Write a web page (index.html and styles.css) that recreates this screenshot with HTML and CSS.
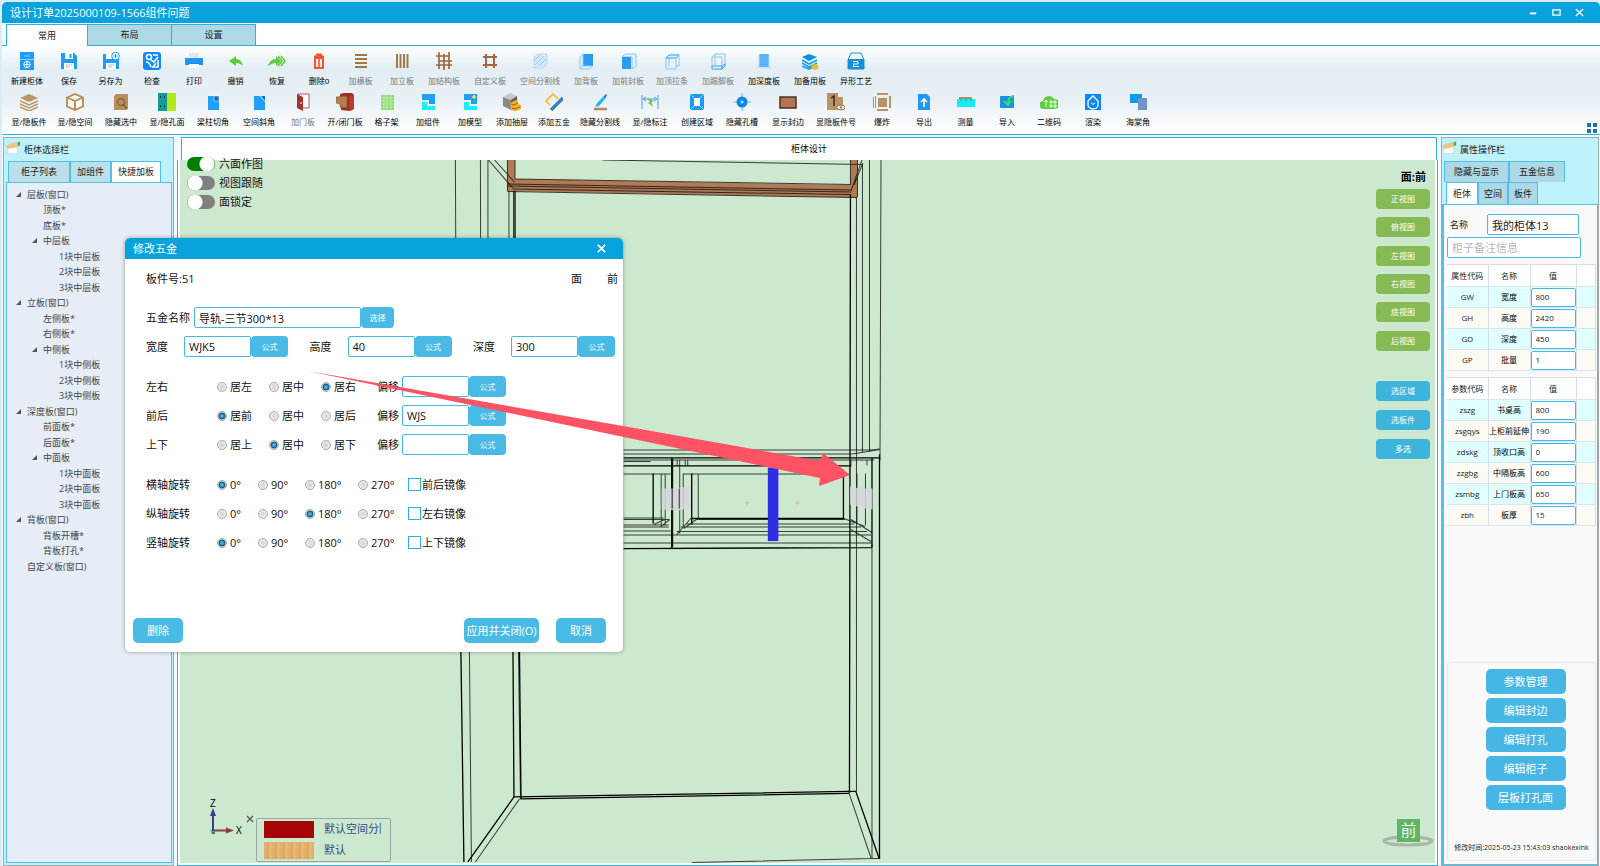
FILE: index.html
```html
<!DOCTYPE html>
<html lang="zh-CN">
<head>
    <meta charset="UTF-8">
    <meta name="viewport" content="width=device-width, initial-scale=1.0">
    <title>设计订单2025000109-1566组件问题</title>
    <link rel="stylesheet" href="styles.css">
</head>
<body>
    <header class="titlebar">
        <h1>设计订单2025000109-1566组件问题</h1>
        <div class="window-controls">
            <button type="button" aria-label="最小化"><svg viewBox="0 0 10 10"><path d="M1 6h7" stroke="#fff" stroke-width="2"/></svg></button>
            <button type="button" aria-label="最大化"><svg viewBox="0 0 10 10"><path d="M1 2h8v6H1z" fill="none" stroke="#fff" stroke-width="1.4"/></svg></button>
            <button type="button" aria-label="关闭"><svg viewBox="0 0 10 10"><path d="M1 1l8 8M9 1l-8 8" stroke="#fff" stroke-width="1.6"/></svg></button>
        </div>
    </header>

    <nav class="ribbon-tabs">
        <button type="button" class="active">常用</button>
        <button type="button">布局</button>
        <button type="button">设置</button>
    </nav>

    <section class="ribbon">
        <div class="tools tools-first">
            <button type="button"><svg viewBox="0 0 18 18"><path d="M2 0h14v18H2z" fill="#1c9cf6"/><path d="M2 7.500h14" stroke="#8fd0ff"/><path d="M6 4h6" stroke="#8fd0ff"/><circle cx="9" cy="12.500" r="3.200" fill="none" stroke="#fff"/><path d="M9 10v5M6.500 12.500h5" stroke="#fff"/></svg>新建柜体</button>
            <button type="button"><svg viewBox="0 0 18 18"><path d="M1 1h13l3 3v13H1z" fill="#1e9bff"/><path d="M5 1h8v6H5zM4 11h10v6H4z" fill="#fff"/><path d="M9.500 2h2v4h-2z" fill="#1e9bff"/><path d="M6 13h6M6 15h4" stroke="#bbb"/></svg>保存</button>
            <button type="button"><svg viewBox="0 0 18 18"><path d="M1 2h13l3 3v12H1z" fill="#1e9bff"/><path d="M4 2h7v5H4zM4 11h10v6H4z" fill="#fff"/><path d="M6 13h6M6 15h4" stroke="#bbb"/><circle cx="13.500" cy="4" r="3.800" fill="#fff" stroke="#1e9bff"/><path d="M13.500 2v4M11.500 4h4" stroke="#1e9bff"/></svg>另存为</button>
            <button type="button"><svg viewBox="0 0 18 18"><rect width="18" height="18" rx="3" fill="#0e8bff"/><circle cx="6" cy="5" r="2.500" fill="none" stroke="#fff" stroke-width="1.500"/><path d="M10 3h5M3 10c3 0 4 2 5 5M8 8l3 2 4-5M15 8v7h-5l3-4" fill="none" stroke="#fff" stroke-width="1.600"/></svg>检查</button>
            <button type="button"><svg viewBox="0 0 18 18"><path d="M4 1h10v5H4z" fill="#e3e6ea"/><path d="M0 6h18v7H0z" fill="#1f97f2"/><path d="M4 12h10v4H4z" fill="#fff"/><path d="M3 11.500h12" stroke="#2b87d0"/></svg>打印</button>
            <button type="button"><svg viewBox="0 0 18 18"><path d="M2 9l7-5v3c4 0 6 3 7 7-2-2-4-3-7-3v3z" fill="#5ccc3c"/></svg>撤销</button>
            <button type="button"><svg viewBox="0 0 18 18"><path d="M13 9L8 4v3c-4 0-7 3-8 7 3-2 5-3 8-3v3z" fill="#5ccc3c"/><path d="M10 4l4 5-4 5M13 4l4 5-4 5" fill="none" stroke="#5ccc3c" stroke-width="1.500"/></svg>恢复</button>
            <button type="button"><svg viewBox="0 0 18 18"><path d="M5 6h8v10H5z" fill="none" stroke="#f2552c" stroke-width="2"/><path d="M4 4.500h10M7 3.500v-1h4v1" fill="none" stroke="#f2552c" stroke-width="1.800"/><path d="M9 7v8" stroke="#f2552c" stroke-width="1.600"/></svg>删除0</button>
            <button type="button" class="dim"><svg viewBox="0 0 18 18"><path d="M3 3h12M3 7h12M3 11h12M3 15h12" stroke="#a3764a" stroke-width="2"/></svg>加横板</button>
            <button type="button" class="dim"><svg viewBox="0 0 18 18"><path d="M4 2v14M7.500 2v14M11 2v14M14.500 2v14" stroke="#a3764a" stroke-width="2"/></svg>加立板</button>
            <button type="button" class="dim"><svg viewBox="0 0 18 18"><path d="M4 0v17M9 2v16M14 0v17M1 4h13M3 9h14M1 13h16" stroke="#a3673a" stroke-width="1.700"/></svg>加结构板</button>
            <button type="button" class="dim"><svg viewBox="0 0 18 18"><path d="M5 2v14M13 2v14M2 5h14M2 13h14" stroke="#a3673a" stroke-width="2"/></svg>自定义板</button>
            <button type="button" class="dim"><svg viewBox="0 0 18 18"><path d="M3 5l4-3h9v10l-4 4H3z" fill="#d3e8fa" stroke="#b5d8f4"/><path d="M4 13l9-9M8 14l7-7M3 9l6-6" stroke="#9ccbf0"/></svg>空间分割线</button>
            <button type="button" class="dim"><svg viewBox="0 0 18 18"><path d="M6 2h10v12H6z" fill="#2c9cf2"/><path d="M3 5l3-3v12l-3 3zM3 17h9l4-3H6" fill="#e4f3ff" stroke="#8cc6f5"/></svg>加背板</button>
            <button type="button" class="dim"><svg viewBox="0 0 18 18"><path d="M6 2h11v12l-4 3V5H3z" fill="#e4f3ff" stroke="#8cc6f5"/><path d="M3 5h9v12H3z" fill="#2c9cf2"/></svg>加前封板</button>
            <button type="button" class="dim"><svg viewBox="0 0 18 18"><path d="M3 6h10v11H3zM6 3h10v11h-3M6 6v8" fill="none" stroke="#8cc6f5"/><path d="M3 6l3-3h10l-3 3z" fill="#dceffd" stroke="#43a6f0"/></svg>加顶拉条</button>
            <button type="button" class="dim"><svg viewBox="0 0 18 18"><path d="M3 5h10v12H3zM6 2h10v12h-3M3 5l3-3v12" fill="none" stroke="#8cc6f5"/><path d="M3 14h10v3H3zM13 14l3-2v2l-3 3z" fill="#dceffd" stroke="#43a6f0"/></svg>加踢脚板</button>
            <button type="button"><svg viewBox="0 0 18 18"><path d="M4 2h10v13H4z" fill="#5db2f7"/><path d="M4 2v13l-2 1M14 2v13l2 1M4 16h11" fill="none" stroke="#b9ddfa"/></svg>加深度板</button>
            <button type="button"><svg viewBox="0 0 18 18"><path d="M1 5l7-3 8 3-8 4z" fill="#0b8fdc"/><path d="M1 8l7 4 8-4M1 11l7 4 8-4M1 14l7 3 4-2" fill="none" stroke="#1b9fe6" stroke-width="1.700"/><ellipse cx="14" cy="15" rx="3.500" ry="2.800" fill="#eebf2d"/></svg>加备用板</button>
            <button type="button"><svg viewBox="0 0 18 18"><path d="M4 1h10l3 7v9H1V8z" fill="#f3fafe" stroke="#178fd6"/><path d="M1 7h16v9q0 1-1 1H2q-1 0-1-1z" fill="#178fd6"/><path d="M6 9.500h5v2.500H6.500v2.500H12" fill="none" stroke="#fff"/></svg>异形工艺</button>
        </div>
        <div class="tools tools-second">
            <button type="button"><svg viewBox="0 0 18 18"><path d="M0 5l9-4 9 4-9 4z" fill="#bb9464"/><path d="M0 8l9 4 9-4M0 11l9 4 9-4M0 14l9 4 9-4" fill="none" stroke="#bb9464" stroke-width="1.500"/></svg>显/隐板件</button>
            <button type="button"><svg viewBox="0 0 18 18"><path d="M9 1l8 3.500v9L9 17l-8-3.500v-9zM1 4.500L9 8l8-3.500M9 8v9" fill="#fffaf2" stroke="#b68d5c" stroke-width="1.900"/></svg>显/隐空间</button>
            <button type="button"><svg viewBox="0 0 18 18"><path d="M2 3l2-2h12v14l-2 2H2z" fill="#b98e5e"/><circle cx="9" cy="9" r="3.500" fill="none" stroke="#7c552c"/><path d="M11 11l4 5" stroke="#7c552c" stroke-width="1.400"/></svg>隐藏选中</button>
            <button type="button"><svg viewBox="0 0 18 18"><path d="M0 0h9v18H0z" fill="#129b95"/><path d="M9 0h9v18H9z" fill="#b4e61c"/><path d="M2 4h1M6 4h1M2 13h1M6 13h1" stroke="#113" stroke-width="1.500"/></svg>显/隐孔面</button>
            <button type="button"><svg viewBox="0 0 18 18"><path d="M4 3h11v14H4z" fill="#1fa0ff"/><path d="M10 3h5v5h-5z" fill="#0870c4" stroke="#fff" stroke-width=".5"/></svg>梁柱切角</button>
            <button type="button"><svg viewBox="0 0 18 18"><path d="M4 3h6l5 6v8H4z" fill="#1fa0ff"/><path d="M11 3h4v5z" fill="#0870c4"/></svg>空间斜角</button>
            <button type="button" class="dim"><svg viewBox="0 0 18 18"><path d="M4 1h11v14H4z" fill="#fff" stroke="#b8544e"/><path d="M3 1l6 3v14l-6-3z" fill="#a3322c"/><path d="M7 9v2" stroke="#fff"/></svg>加门板</button>
            <button type="button"><svg viewBox="0 0 18 18"><path d="M4 1l4-1h8l2 2v14l-4 2-9-1z" fill="#9d2f22"/><path d="M13 3l5-1v14l-5 2z" fill="#c03a28"/><path d="M0 4l11-1v12l-7-1v-3l-4-1z" fill="#b77d50" stroke="#8a5429" stroke-width=".6"/></svg>开/闭门板</button>
            <button type="button"><svg viewBox="0 0 18 18"><path d="M3 2h13v15H3z" fill="#90dc72"/><path d="M3 5h13M3 8h13M3 11h13M3 14h13M6 2v15M9 2v15M13 2v15" stroke="#c5f0b5" stroke-width=".7"/></svg>格子架</button>
            <button type="button"><svg viewBox="0 0 18 18"><path d="M3 1h13v10h-6V7H3z" fill="#1fa0ff"/><path d="M3 9h5v4h8v4H3z" fill="#19efff"/></svg>加组件</button>
            <button type="button"><svg viewBox="0 0 18 18"><path d="M3 1h13v10h-6V7H3z" fill="#1fa0ff"/><path d="M3 9h5v4h8v4H3z" fill="#19efff"/><path d="M13 2v4M11 4h4" stroke="#ffe23d" stroke-width="1.500"/></svg>加模型</button>
            <button type="button"><svg viewBox="0 0 18 18"><path d="M0 4l7-4 7 3-6 4z" fill="#c8c8c8"/><path d="M0 4l8 3v10l-8-4z" fill="#888"/><path d="M8 7l6-4v10l-6 4z" fill="#5c5c5c"/><path d="M7 10l6-3 2 1v3l3 1v4l-7 3-3-3z" fill="#f0b32c"/><path d="M8 11l3 1 4-2M9 15l3 1 5-2" fill="none" stroke="#9a6510"/></svg>添加抽屉</button>
            <button type="button"><svg viewBox="0 0 18 18"><path d="M5 12L1 8l7-7 5 5" fill="none" stroke="#f7bf32" stroke-width="1.800"/><path d="M6 17L18 5" stroke="#3c80b8" stroke-width="3.400"/></svg>添加五金</button>
            <button type="button"><svg viewBox="0 0 18 18"><path d="M12 4l3-3 1 1-2 4z" fill="#1c7fe0"/><path d="M12 4l2 2-6 7-4 1 2-4z" fill="#19bdf5"/><path d="M3 16h13" stroke="#b38a64" stroke-width="2.500"/></svg>隐藏分割线</button>
            <button type="button"><svg viewBox="0 0 18 18"><path d="M1 2v14M17 2v14M2 6h14M2 6l3-2M2 6l3 2M16 6l-3-2M16 6l-3 2" fill="none" stroke="#4ba3dc"/><path d="M6 5l7 3-3 1 2 5-5-4 2-1z" fill="#5ccc3c"/></svg>显/隐标注</button>
            <button type="button"><svg viewBox="0 0 18 18"><path d="M2 1h14v16H2z" fill="#189cf8"/><path d="M6 5h6v8H6z" fill="#fff"/><path d="M2 1l4 4M16 1l-4 4M2 17l4-4M16 17l-4-4" stroke="#fff" stroke-width=".6"/></svg>创建区域</button>
            <button type="button"><svg viewBox="0 0 18 18"><path d="M9 0v18M0 9h18" stroke="#1de0f0"/><circle cx="9" cy="9" r="5.500" fill="#1385e8"/><circle cx="9" cy="9" r="1.500" fill="#a6e8ff"/></svg>隐藏孔槽</button>
            <button type="button"><svg viewBox="0 0 18 18"><path d="M1 4h16v11H1z" fill="#b27453" stroke="#4d3223" stroke-width="1.500"/></svg>显示封边</button>
            <button type="button"><svg viewBox="0 0 18 18"><path d="M0 0h11v4h5v13H0z" fill="#ba9268"/><path d="M4 5l3-2v10" fill="none" stroke="#3c2a18" stroke-width="1.500"/><ellipse cx="14" cy="14.500" rx="4" ry="2.500" fill="#fff" stroke="#9a7248"/><circle cx="14" cy="14.500" r="1.300" fill="#9a7248"/></svg>显隐板件号</button>
            <button type="button"><svg viewBox="0 0 18 18"><path d="M5 5h9v9H5zM4 0h11v2H4zM4 16h11v2H4zM0 4h1v11H0zM2 3h1v12H2zM16 3h2v12h-2z" fill="#ba9268"/></svg>爆炸</button>
            <button type="button"><svg viewBox="0 0 18 18"><path d="M3 1h9l3 3v13H3z" fill="#1f97ff"/><path d="M9 14V7M6 9l3-3 3 3" fill="none" stroke="#fff" stroke-width="1.600"/></svg>导出</button>
            <button type="button"><svg viewBox="0 0 18 18"><path d="M2 4h13v3H2z" fill="#b38a64"/><path d="M0 6h18v8H0z" fill="#12edf5"/><path d="M4 6v2M9 6v2M14 6v2" stroke="#0ab"/></svg>测量</button>
            <button type="button"><svg viewBox="0 0 18 18"><rect x="2" y="3" width="14" height="12" rx="1" fill="#1a8fe6"/><path d="M16 3c-3 0-6 2-6 7M6 8l4 4 3-4" fill="none" stroke="#35e05b" stroke-width="2"/></svg>导入</button>
            <button type="button"><svg viewBox="0 0 18 18"><path d="M4 16a4 4 0 0 1-1-8 6 6 0 0 1 11-2 5 5 0 0 1 1 10z" fill="#60cc45"/><path d="M6 14V7M4 9l2-2 2 2M10 8h2v2h-2zM14 8h2v2h-2zM10 12h2v2h-2zM14 12h2v2h-2z" fill="none" stroke="#e8ffe0"/></svg>二维码</button>
            <button type="button"><svg viewBox="0 0 18 18"><path d="M1 1h16v16H1z" fill="#0c86ff"/><path d="M4 8l5-5 5 5v4a5 4 0 0 1-10 0z" fill="none" stroke="#fff" stroke-width="1.300"/><path d="M7 10q2 3 4 0" fill="none" stroke="#fff"/></svg>渲染</button>
            <button type="button"><svg viewBox="0 0 18 18"><path d="M1 1h12v9H1z" fill="#079df0"/><path d="M9 5h9v12H9z" fill="#7294c4"/></svg>海棠角</button>
        </div>
        <button type="button" class="ribbon-more" aria-label="更多"><svg viewBox="0 0 12 12"><path d="M1 1h4v4H1zM7 1h4v4H7zM1 7h4v4H1zM7 7h4v4H7z" fill="#1c72b8"/></svg></button>
    </section>

    <main class="workspace">
        <aside class="panel left-panel">
            <div class="panel-title">
                <svg viewBox="0 0 16 14"><path d="M2 5h10v8H2z" fill="#fdfdfd" stroke="#ccc" stroke-width=".6"/><path d="M0 5l5-3 6-1 3 1-1 4-6 1-4 1z" fill="#ecc48a"/><path d="M12 1l3-1v4l-2 1z" fill="#3eb24a"/></svg>
                <h2>柜体选择栏</h2>
            </div>
            <nav class="tabs">
                <button type="button">柜子列表</button>
                <button type="button">加组件</button>
                <button type="button" class="active">快捷加板</button>
            </nav>
            <ul class="tree">
                <li class="open">层板(窗口)</li>
                <li class="level-2">顶板*</li>
                <li class="level-2">底板*</li>
                <li class="level-2 open">中层板</li>
                <li class="level-3">1块中层板</li>
                <li class="level-3">2块中层板</li>
                <li class="level-3">3块中层板</li>
                <li class="open">立板(窗口)</li>
                <li class="level-2">左侧板*</li>
                <li class="level-2">右侧板*</li>
                <li class="level-2 open">中侧板</li>
                <li class="level-3">1块中侧板</li>
                <li class="level-3">2块中侧板</li>
                <li class="level-3">3块中侧板</li>
                <li class="open">深度板(窗口)</li>
                <li class="level-2">前面板*</li>
                <li class="level-2">后面板*</li>
                <li class="level-2 open">中面板</li>
                <li class="level-3">1块中面板</li>
                <li class="level-3">2块中面板</li>
                <li class="level-3">3块中面板</li>
                <li class="open">背板(窗口)</li>
                <li class="level-2">背板开槽*</li>
                <li class="level-2">背板打孔*</li>
                <li>自定义板(窗口)</li>
            </ul>
        </aside>

        <section class="design">
            <h2 class="design-title">柜体设计</h2>
            <div class="canvas-frame">
                <div class="canvas">
                    <svg class="wireframe" viewBox="180 161 1255 702" preserveAspectRatio="xMinYMin slice">
                        <!-- top shelf -->
                        <path d="M507 161h7.500v19l335 6v-25h7v37.500L507 192z" fill="#b17a55"/>
                        <path d="M514.500 180L850 185.500M507 185l343 6M507 187l343 6M514 190l335 5.500M507 192.500l349 6" class="thin"/>
                        <path d="M507 161v31M514.500 161v19M849.500 161v24M856.500 161v37M488 161l26 30M494 161l20 22M602 161l259 4.500M861 161l-11 31M862 164l-9 22" class="thin"/>
                        <!-- carcass sides -->
                        <path d="M455 161l2 491M480 161l1 491M487.500 161v491M508.500 192v460M513 192v260M855.500 198v594M861.500 165v288M868.500 161v291M880 161l-1 300M469 652l2 210M871 545v314M518 652l2 147" class="thin"/>
                        <path d="M514.500 192l.5 460M849.500 195l-1 598M460.500 652l3 210M512.500 652l1 145M519 652l1.500 147M878.500 455v404" class="edge"/>
                        <!-- bottom -->
                        <path d="M513.500 797L848 791.500h7M520 799l328-5.500M513.500 797l-46 65M855 792l23 66" class="edge"/>
                        <path d="M519 799l-44 63M848 793l22 65M691 862.500l179-4h9" class="thin"/>
                        <!-- drawers -->
                        <path d="M623 450.500h247l9-1M623 454.500h228l28-4.500M623 460.500h250M623 462h27M623 474.500h47M683 474.500h165M623 518.500h40M623 520h46M697 520h147M623 525.500h45M685 524.500h168M623 527.500h45M680 527.500h180M623 531.500h47M676 532h190M623 535.500h247M623 543.500h248M660.500 474v52M664.500 474v52M676.500 460v6M679 460v74M684.500 460v6M687 460v6M682.500 474v53M697.500 474v45M856 474v50M864.500 474v52M843 519l21 8M850 520l21 13M850 530l20 12M697 519l-14 10M691 518l-15 17M664 520l-11 5M669 520l-9 7M850 461v6M866 460v6" class="thin"/>
                        <path d="M623 458.500h256M623 466.500h227M691 519h152M623 549l248-1M652.500 474v50M691 474v51M842.500 474v45M871 459v89M671 459v89" class="edge"/>
                        <path d="M671.500 459v89" stroke="#111" stroke-width="2"/>
                        <path d="M661 489h11l18-2v21l-12 3-17-1zM849 487l10 2h12.500v21l-8-1-14.500-4z" fill="#d6d6de" fill-opacity=".85"/>
                        <path d="M671.500 489v20M678.500 489v20" class="thin"/>
                        <path d="M767 468h10.500v73.500H767z" fill="#2e2ee2"/>
                        <circle cx="746.500" cy="503.500" r="1.800" fill="#d9c29a"/>
                        <circle cx="796.500" cy="503.500" r="1.800" fill="#d9c29a"/>
                    </svg>

                    <div class="switches">
                        <label><input type="checkbox" checked>六面作图</label>
                        <label><input type="checkbox">视图跟随</label>
                        <label><input type="checkbox">面锁定</label>
                    </div>

                    <div class="views">
                        <strong>面:前</strong>
                        <div class="view-group">
                            <button type="button">正视图</button>
                            <button type="button">俯视图</button>
                            <button type="button">左视图</button>
                            <button type="button">右视图</button>
                            <button type="button">底视图</button>
                            <button type="button">后视图</button>
                        </div>
                        <div class="select-group">
                            <button type="button">选区域</button>
                            <button type="button">选板件</button>
                            <button type="button">多选</button>
                        </div>
                    </div>

                    <div class="corner">
                        <svg class="axis" viewBox="0 0 40 48">
                            <path d="M9 35V16" stroke="#3a3a96" stroke-width="2"/><path d="M9 12l3 8H6z" fill="#3a3a96"/>
                            <path d="M10 34.500h13" stroke="#8c3f3f" stroke-width="2"/><path d="M30 34.500l-8-3v6z" fill="#8c3f3f"/>
                            <path d="M6 33l3 3 2-3v5H8z" fill="#3f8c4a"/>
                            <text x="6" y="11">Z</text><text x="32" y="38">X</text>
                        </svg>
                        <button type="button" class="legend-close" aria-label="关闭图例"><svg viewBox="0 0 8 8"><path d="M1 1l6 6M7 1L1 7" stroke="#555" stroke-width="1.200"/></svg></button>
                        <div class="legend">
                            <span class="swatch red"></span><span class="legend-name">默认空间分隔</span>
                            <span class="swatch wood"></span><span class="legend-name">默认</span>
                        </div>
                    </div>

                    <div class="compass">
                        <svg viewBox="0 0 54 12"><ellipse cx="27" cy="6" rx="24" ry="4" fill="none" stroke="#a9b8aa" stroke-width="3"/></svg>
                        <span>前</span>
                    </div>
                </div>
            </div>
        </section>

        <aside class="panel right-panel">
            <div class="panel-title">
                <svg viewBox="0 0 16 14"><path d="M2 5h10v8H2z" fill="#fdfdfd" stroke="#ccc" stroke-width=".6"/><path d="M0 5l5-3 6-1 3 1-1 4-6 1-4 1z" fill="#ecc48a"/><path d="M12 1l3-1v4l-2 1z" fill="#3eb24a"/></svg>
                <h2>属性操作栏</h2>
            </div>
            <nav class="tabs">
                <button type="button">隐藏与显示</button>
                <button type="button">五金信息</button>
            </nav>
            <nav class="tabs tabs-sub">
                <button type="button" class="active">柜体</button>
                <button type="button">空间</button>
                <button type="button">板件</button>
            </nav>
            <div class="properties">
                <div class="name-row">
                    <label for="cabinetName">名称</label>
                    <input type="text" id="cabinetName" value="我的柜体13">
                </div>
                <input type="text" class="remark" placeholder="柜子备注信息" aria-label="柜子备注信息">

                <table>
                    <colgroup><col class="col-code"><col class="col-name"><col class="col-value"><col></colgroup>
                    <thead><tr><th>属性代码</th><th>名称</th><th>值</th><th></th></tr></thead>
                    <tbody>
                        <tr><td>GW</td><td>宽度</td><td><input type="text" value="800" aria-label="宽度"></td><td></td></tr>
                        <tr><td>GH</td><td>高度</td><td><input type="text" value="2420" aria-label="高度"></td><td></td></tr>
                        <tr><td>GD</td><td>深度</td><td><input type="text" value="450" aria-label="深度"></td><td></td></tr>
                        <tr><td>GP</td><td>批量</td><td><input type="text" value="1" aria-label="批量"></td><td></td></tr>
                    </tbody>
                </table>

                <table>
                    <colgroup><col class="col-code"><col class="col-name"><col class="col-value"><col></colgroup>
                    <thead><tr><th>参数代码</th><th>名称</th><th>值</th><th></th></tr></thead>
                    <tbody>
                        <tr><td>zszg</td><td>书桌高</td><td><input type="text" value="800" aria-label="书桌高"></td><td></td></tr>
                        <tr><td>zsgqys</td><td>上柜前延伸</td><td><input type="text" value="190" aria-label="上柜前延伸"></td><td></td></tr>
                        <tr><td>zdskg</td><td>顶收口高</td><td><input type="text" value="0" aria-label="顶收口高"></td><td></td></tr>
                        <tr><td>zzgbg</td><td>中隔板高</td><td><input type="text" value="600" aria-label="中隔板高"></td><td></td></tr>
                        <tr><td>zsmbg</td><td>上门板高</td><td><input type="text" value="650" aria-label="上门板高"></td><td></td></tr>
                        <tr><td>zbh</td><td>板厚</td><td><input type="text" value="15" aria-label="板厚"></td><td></td></tr>
                    </tbody>
                </table>

                <div class="actions">
                    <button type="button">参数管理</button>
                    <button type="button">编辑封边</button>
                    <button type="button">编辑打孔</button>
                    <button type="button">编辑柜子</button>
                    <button type="button">层板打孔面</button>
                    <p>修改时间:2025-05-23 15:43:03 shaokexink</p>
                </div>
            </div>
        </aside>
    </main>

    <form class="dialog" role="dialog" aria-labelledby="dialogTitle">
        <div class="dialog-head">
            <h2 id="dialogTitle">修改五金</h2>
            <button type="button" aria-label="关闭"><svg viewBox="0 0 10 10"><path d="M1 1l8 8M9 1l-8 8" stroke="#fff" stroke-width="1.800"/></svg></button>
        </div>
        <div class="dialog-body">
            <div class="row info">
                <span>板件号:51</span>
                <span class="face">面</span>
                <span>前</span>
            </div>
            <div class="row">
                <label for="hwName" class="name-label">五金名称</label>
                <input type="text" id="hwName" class="wide" value="导轨-三节300*13">
                <button type="button" class="pick">选择</button>
            </div>
            <div class="row sizes">
                <div><label for="hwWidth">宽度</label><input type="text" id="hwWidth" value="WJK5"><button type="button">公式</button></div>
                <div><label for="hwHeight">高度</label><input type="text" id="hwHeight" value="40"><button type="button">公式</button></div>
                <div><label for="hwDepth">深度</label><input type="text" id="hwDepth" value="300"><button type="button">公式</button></div>
            </div>

            <div class="group">
                <div class="row place">
                    <span>左右</span>
                    <label><input type="radio" name="lr">居左</label>
                    <label><input type="radio" name="lr">居中</label>
                    <label><input type="radio" name="lr" checked>居右</label>
                    <label for="offLr" class="offset">偏移</label><input type="text" id="offLr"><button type="button">公式</button>
                </div>
                <div class="row place">
                    <span>前后</span>
                    <label><input type="radio" name="fb" checked>居前</label>
                    <label><input type="radio" name="fb">居中</label>
                    <label><input type="radio" name="fb">居后</label>
                    <label for="offFb" class="offset">偏移</label><input type="text" id="offFb" value="WJS"><button type="button">公式</button>
                </div>
                <div class="row place">
                    <span>上下</span>
                    <label><input type="radio" name="ud">居上</label>
                    <label><input type="radio" name="ud" checked>居中</label>
                    <label><input type="radio" name="ud">居下</label>
                    <label for="offUd" class="offset">偏移</label><input type="text" id="offUd"><button type="button">公式</button>
                </div>
            </div>

            <div class="group">
                <div class="row rotate">
                    <span>横轴旋转</span>
                    <label><input type="radio" name="rx" checked>0°</label>
                    <label><input type="radio" name="rx">90°</label>
                    <label><input type="radio" name="rx">180°</label>
                    <label><input type="radio" name="rx">270°</label>
                    <label class="mirror"><input type="checkbox">前后镜像</label>
                </div>
                <div class="row rotate">
                    <span>纵轴旋转</span>
                    <label><input type="radio" name="ry">0°</label>
                    <label><input type="radio" name="ry">90°</label>
                    <label><input type="radio" name="ry" checked>180°</label>
                    <label><input type="radio" name="ry">270°</label>
                    <label class="mirror"><input type="checkbox">左右镜像</label>
                </div>
                <div class="row rotate">
                    <span>竖轴旋转</span>
                    <label><input type="radio" name="rz" checked>0°</label>
                    <label><input type="radio" name="rz">90°</label>
                    <label><input type="radio" name="rz">180°</label>
                    <label><input type="radio" name="rz">270°</label>
                    <label class="mirror"><input type="checkbox">上下镜像</label>
                </div>
            </div>
        </div>
        <div class="dialog-foot">
            <button type="button" class="delete">删除</button>
            <button type="button" class="apply">应用并关闭(O)</button>
            <button type="button">取消</button>
        </div>
    </form>

    <svg class="pointer" viewBox="0 0 542 118"><path d="M0 1L315 56 512 91l3-8 27 22-31 11 1-8-182-38z" fill="#ff5263"/></svg>
</body>
</html>
```

FILE: styles.css
```css
* {
    box-sizing: border-box;
}
body {
    margin: 0;
    min-height: 100vh;
    display: flex;
    flex-direction: column;
    position: relative;
    padding: 2px 0 0 2px;
    background: #d9ecf8;
    font-family: "Open Sans", "Noto Sans CJK SC", sans-serif;
    font-size: 11px;
    line-height: 16px;
    color: #222;
}
h1, h2, p, ul {
    margin: 0;
    padding: 0;
    font-weight: normal;
}
h2 {
    font-size: 9px;
}
button, input {
    font: inherit;
    color: inherit;
    margin: 0;
    padding: 0;
}
button {
    border: none;
    background: none;
    white-space: nowrap;
    cursor: pointer;
}
svg {
    display: block;
}
input[type="text"] {
    height: 21px;
    min-width: 0;
    padding: 0 4px;
    border: 1px solid #45b8e6;
    border-radius: 2px;
    background: #fff;
}

/* title bar */
.titlebar {
    display: flex;
    align-items: center;
    justify-content: space-between;
    height: 21px;
    padding: 0 16px 0 8px;
    border-radius: 5px 5px 0 0;
    background: #08a2dc;
    color: #fff;
}
.titlebar h1 {
    font-size: 11px;
}
.window-controls {
    display: flex;
    gap: 14px;
}
.window-controls svg {
    width: 9px;
    height: 9px;
}

/* ribbon */
.ribbon-tabs {
    display: flex;
    height: 22px;
    padding: 1px 0 0 4px;
    background: #fff;
}
.ribbon-tabs button {
    width: 84px;
    border: 1px solid #2fb0e0;
    border-left-width: 0;
    border-bottom: none;
    background: #add8e6;
    font-size: 9px;
}
.ribbon-tabs .active {
    width: 82px;
    border-left-width: 1px;
    margin-bottom: -1px;
    background: #fff;
    position: relative;
    z-index: 1;
}
.ribbon {
    position: relative;
    height: 90px;
    padding: 6px 4px 0;
    border-top: 1px solid #2fb0e0;
    border-bottom: 1px solid #2fb0e0;
    background: linear-gradient(#fff, #e2eef4 25%, #e8f0f5 60%, #fff);
}
.tools {
    display: grid;
    height: 41px;
}
.tools-first {
    grid-template-columns: repeat(3, 42px 42px 41px) 42px 42px repeat(2, 50px) repeat(2, 42px) repeat(5, 46px);
}
.tools-second {
    grid-template-columns: repeat(6, 46px) 42px 42px 41px repeat(4, 42px) 50px 50px 44px 46px 46px 50px 42px 42px 41px 42px 42px 46px 44px;
}
.tools button {
    display: flex;
    flex-direction: column;
    align-items: center;
    gap: 5px;
    font-size: 8px;
    line-height: 12px;
    color: #000;
}
.tools .dim {
    color: #777;
}
.tools svg {
    width: 18px;
    height: 18px;
}
.ribbon-more {
    position: absolute;
    right: 2px;
    bottom: 0;
}
.ribbon-more svg {
    width: 12px;
    height: 12px;
}

/* workspace */
.workspace {
    flex: 1;
    display: flex;
    gap: 3px;
    padding: 2px 1px 0;
    background: #f4fafd;
}
.panel {
    display: flex;
    flex-direction: column;
    border: 1px solid #a0a8ac;
    background: #bdf1fb;
}
.left-panel {
    width: 171px;
    padding: 0 1px 2px 2px;
}
.right-panel {
    width: 158px;
}
.panel-title {
    display: flex;
    align-items: center;
    gap: 3px;
    height: 23px;
}
.panel-title svg {
    width: 15px;
    height: 14px;
    margin-bottom: 4px;
}
.tabs {
    display: flex;
    padding-left: 2px;
}
.tabs button {
    height: 21px;
    padding: 0 9px;
    border: 1px solid #4fc0ea;
    border-bottom: none;
    background: #add8e6;
    font-size: 9px;
}
.left-panel .tabs button {
    padding: 0 6px;
    background: #bbe0ea;
}
.left-panel .tabs button:first-child {
    padding: 0 12px;
}
.tabs .active, .left-panel .tabs .active {
    background: #fff;
}
.tabs-sub {
    padding-left: 4px;
}
.right-panel .tabs-sub button {
    height: 22px;
    padding: 0 5px;
}
.right-panel .tabs-sub .active {
    padding: 0 6px;
}
.tree {
    flex: 1;
    display: grid;
    grid-auto-rows: 15px 16px;
    align-content: start;
    padding: 4px 0 0 20px;
    border: 1px solid #4fc0ea;
    background: #e6edf6;
    list-style: none;
    font-size: 9px;
    color: #444;
}
.tree .level-2 {
    padding-left: 16px;
}
.tree .level-3 {
    padding-left: 32px;
}
.tree .open::before {
    content: "";
    float: left;
    width: 0;
    margin: 5px 0 0 -11px;
    border-left: 5px solid transparent;
    border-bottom: 5px solid #555;
}

/* design area */
.design {
    flex: 1;
    min-width: 0;
    display: flex;
    flex-direction: column;
}
.design-title {
    height: 23px;
    margin: 0 1px 0 4px;
    border: 1px solid #2fb0e0;
    border-bottom: none;
    background: #fff;
    line-height: 21px;
    text-align: center;
    color: #000;
}
.canvas-frame {
    flex: 1;
    display: flex;
    padding: 0 2px 2px;
    border: 1px solid #2fb0e0;
    border-top: none;
    background: #fff;
}
.canvas {
    flex: 1;
    position: relative;
    background: #cce8cf;
}
.wireframe {
    position: absolute;
    width: 100%;
    height: 100%;
}
.wireframe .thin {
    fill: none;
    stroke: #111;
    stroke-opacity: .8;
    stroke-width: 1px;
}
.wireframe .edge {
    fill: none;
    stroke: #000;
    stroke-width: 1.3px;
}
.switches {
    position: absolute;
    left: 7px;
    top: -5px;
    display: grid;
    row-gap: 1px;
    font-size: 11px;
    line-height: 18px;
    color: #111;
}
.switches label {
    display: flex;
    align-items: center;
    gap: 4px;
}
.switches input {
    appearance: none;
    width: 28px;
    height: 14px;
    border-radius: 7px;
    background: radial-gradient(circle at 8px 7px, #fff 7px, #808080 8px);
}
.switches input:checked {
    background: radial-gradient(circle at 20px 7px, #fff 7px, #008000 8px);
}
.views {
    position: absolute;
    right: 5px;
    top: 9px;
    width: 54px;
    text-align: right;
}
.views strong {
    display: block;
    height: 20px;
    padding-right: 4px;
    color: #000;
}
.view-group, .select-group {
    display: grid;
    grid-auto-rows: 28px 29px 28px;
    align-items: start;
}
.select-group {
    margin-top: 22px;
    grid-auto-rows: 29px;
}
.views button {
    height: 20px;
    border-radius: 4px;
    background: #86ba55;
    color: #fff;
    font-size: 8px;
}
.views .select-group button {
    background: #3db4dc;
}
.corner {
    position: absolute;
    left: 24px;
    bottom: 1px;
    display: flex;
    align-items: flex-end;
    gap: 2px;
}
.axis {
    width: 40px;
    height: 48px;
    margin-bottom: 18px;
    font-size: 10px;
}
.legend-close {
    margin-bottom: 39px;
}
.legend-close svg {
    width: 8px;
    height: 8px;
}
.legend {
    display: grid;
    grid-template-columns: 50px 57px;
    column-gap: 10px;
    row-gap: 4px;
    width: 135px;
    padding: 2px 7px;
    border: 1px solid #95a6a5;
    border-radius: 2px;
    color: #2e4d8c;
}
.legend-name {
    height: 17px;
    overflow: hidden;
    white-space: nowrap;
}
.swatch {
    height: 17px;
    background: #a50505;
}
.wood {
    background: repeating-linear-gradient(90deg, #e3ae6c 0 3px, #dca765 3px 5px, #e6b473 5px 8px);
}
.compass {
    position: absolute;
    right: 0;
    bottom: 16px;
    width: 54px;
}
.compass svg {
    width: 54px;
    height: 12px;
}
.compass span {
    position: absolute;
    left: 16px;
    bottom: 5px;
    width: 23px;
    height: 23px;
    background: #5fb466;
    color: #eaf7ea;
    font-size: 16px;
    line-height: 23px;
    text-align: center;
}

/* property panel */
.properties {
    flex: 1;
    display: flex;
    flex-direction: column;
    padding: 9px 1px 3px 3px;
    border: 1px solid #4fc0ea;
    border-left-width: 2px;
    background: #f9f9f9;
}
.name-row {
    display: flex;
    align-items: center;
    justify-content: space-between;
    padding: 0 17px 0 3px;
    font-size: 9px;
}
.name-row input {
    width: 92px;
    font-size: 11px;
}
.properties .remark {
    width: 134px;
    margin-top: 2px;
}
.remark::placeholder {
    color: #b8b8b8;
}
table {
    width: 100%;
    margin-top: 6px;
    border-collapse: collapse;
    table-layout: fixed;
    border-top: 1px solid #dcdcdc;
    background: #fff;
    font-size: 8px;
}
.col-code {
    width: 41px;
}
.col-name {
    width: 42px;
}
.col-value {
    width: 46px;
}
th, td {
    height: 21px;
    padding: 0;
    border-right: 1px solid #d4dfe8;
    border-bottom: 1px solid #d8e6f2;
    font-weight: normal;
    text-align: center;
    white-space: nowrap;
    overflow: hidden;
}
th {
    height: 22px;
}
td:nth-child(2) {
    color: #000;
}
tbody tr:nth-child(odd) {
    background: #e0ffff;
}
tbody tr:nth-child(even) {
    background: #fbfaf3;
}
td input[type="text"] {
    display: block;
    width: 100%;
    height: 19px;
    padding-bottom: 1px;
}
.actions {
    display: flex;
    flex-direction: column;
    align-items: center;
    gap: 4px;
    height: 199px;
    margin-top: auto;
    padding: 6px 0 0 8px;
    border: 1px solid #e3ebf2;
    border-radius: 3px;
}
.actions button {
    width: 80px;
    height: 25px;
    border-radius: 5px;
    background: #46b7e4;
    color: #fff;
}
.actions p {
    margin: 26px 8px 0 0;
    font-size: 7px;
    white-space: nowrap;
}

/* hardware dialog */
.dialog {
    position: absolute;
    left: 125px;
    top: 238px;
    width: 498px;
    border-radius: 5px;
    background: #fff;
    box-shadow: 0 0 4px rgba(0,0,0,0.35);
    color: #111;
}
.dialog-head {
    display: flex;
    align-items: center;
    justify-content: space-between;
    height: 21px;
    padding: 0 17px 0 8px;
    border-radius: 5px 5px 0 0;
    background: #08a2dc;
    color: #fff;
}
.dialog-head h2 {
    font-size: 11px;
}
.dialog-head svg {
    width: 9px;
    height: 9px;
}
.dialog-body {
    padding: 9px 5px 0 21px;
}
.row {
    display: flex;
    align-items: center;
    height: 21px;
    margin-bottom: 8px;
}
.info {
    margin-bottom: 18px;
}
.face {
    margin: 0 25px 0 auto;
}
.name-label {
    width: 48px;
}
.row input[type="text"] {
    width: 67px;
}
.row input.wide {
    width: 167px;
}
.row button {
    width: 37px;
    height: 21px;
    border-radius: 4px;
    background: #49bae6;
    color: #fff;
    font-size: 8px;
}
.row .pick {
    width: 33px;
}
.sizes {
    justify-content: space-between;
    padding-right: 3px;
}
.sizes div {
    display: flex;
    align-items: center;
}
.sizes label {
    width: 38px;
}
.group {
    margin-top: 19px;
}
.place, .rotate {
    display: grid;
    justify-content: start;
}
.place {
    grid-template-columns: 71px 52px 52px 56px 25px 67px 37px;
}
.rotate {
    grid-template-columns: 71px 41px 47px 53px 50px 60px;
}
.row label {
    display: flex;
    align-items: center;
    gap: 3px;
    white-space: nowrap;
}
.row .mirror {
    gap: 1px;
}
input[type="radio"] {
    appearance: none;
    width: 10px;
    height: 10px;
    border: 1px solid #aaa;
    border-radius: 50%;
    background: radial-gradient(circle, #d4d4d4, #f4f4f4);
}
input[type="radio"]:checked {
    background: radial-gradient(circle at 4px 4px, #5fd0f5 0, #155a86 3px, #e8eef2 4px);
}
.mirror input {
    appearance: none;
    width: 13px;
    height: 13px;
    border: 1px solid #2fb0e0;
    background: #fff;
}
.dialog-foot {
    display: flex;
    gap: 17px;
    padding: 57px 17px 9px 8px;
}
.dialog-foot button {
    width: 50px;
    height: 25px;
    border-radius: 5px;
    background: #49bae6;
    color: #fff;
}
.dialog-foot .delete {
    margin-right: auto;
}
.dialog-foot .apply {
    width: 75px;
}

/* red pointer from the dialog to the rail */
.pointer {
    position: absolute;
    left: 308px;
    top: 370px;
    width: 542px;
    height: 118px;
    pointer-events: none;
}
```
